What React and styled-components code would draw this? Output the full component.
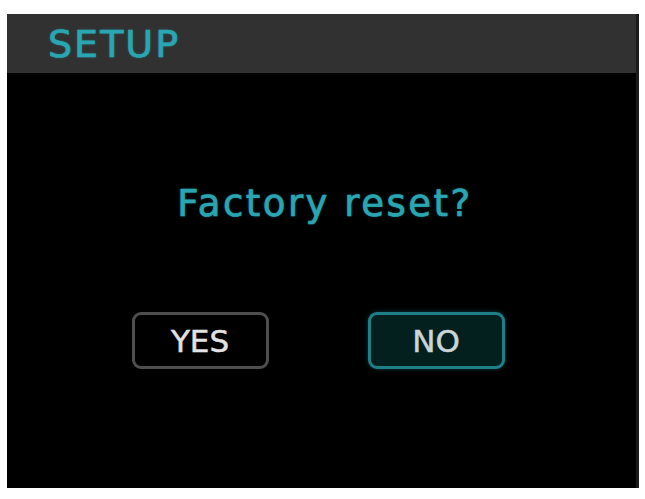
import React from "react";
import styled, { createGlobalStyle } from "styled-components";

const Global = createGlobalStyle`
  html, body {
    margin: 0;
    padding: 0;
    background: #ffffff;
  }
  body {
    font-family: "DejaVu Sans", "Liberation Sans", sans-serif;
  }
`;

const Screen = styled.div`
  margin: 14px 0 0 7px;
  width: 629px;
  height: 474px;
  background: #000;
  border-right: 3px solid #1b1b1b;
  display: flex;
  flex-direction: column;
`;

const TitleBar = styled.header`
  height: 59px;
  background: #313131;
  display: flex;
  align-items: center;
  padding-left: 41px;
  box-sizing: border-box;
`;

const Title = styled.h1`
  margin: 0;
  font-size: 38px;
  font-weight: 400;
  letter-spacing: 2px;
  color: #2aa6b2;
  -webkit-text-stroke: 0.7px #2aa6b2;
  line-height: 1;
  text-shadow: 0 0 3px rgba(42, 166, 178, 0.45);
`;

const Body = styled.main`
  flex: 1;
  display: flex;
  flex-direction: column;
  align-items: center;
  padding-top: 112px;
`;

const Prompt = styled.p`
  margin: 0 0 0 7px;
  font-size: 37px;
  font-weight: 400;
  letter-spacing: 2.5px;
  color: #2aa6b2;
  -webkit-text-stroke: 0.7px #2aa6b2;
  line-height: 1;
  text-shadow: 0 0 3px rgba(42, 166, 178, 0.45);
`;

const Choices = styled.div`
  display: flex;
  gap: 99px;
  margin-top: 90px;
  margin-left: -7px;
`;

const Choice = styled.button`
  width: 137px;
  height: 57px;
  box-sizing: border-box;
  border-radius: 9px;
  border: 3px solid ${(p) => (p.$selected ? "#1e7f88" : "#4e4e4e")};
  background: ${(p) => (p.$selected ? "#03201f" : "#000")};
  color: ${(p) => (p.$selected ? "#c9d6d6" : "#e2e2e2")};
  -webkit-text-stroke: 0.5px ${(p) => (p.$selected ? "#c9d6d6" : "#e2e2e2")};
  font-family: "DejaVu Sans", "Liberation Sans", sans-serif;
  font-size: 31px;
  font-weight: 400;
  display: flex;
  align-items: center;
  justify-content: center;
  padding: 0;
  box-shadow: ${(p) => (p.$selected ? "0 0 4px rgba(30,127,136,0.5)" : "none")};
`;

export default function App() {
  return (
    <>
      <Global />
      <Screen>
        <TitleBar>
          <Title>SETUP</Title>
        </TitleBar>
        <Body>
          <Prompt>Factory reset?</Prompt>
          <Choices>
            <Choice>YES</Choice>
            <Choice $selected>NO</Choice>
          </Choices>
        </Body>
      </Screen>
    </>
  );
}
